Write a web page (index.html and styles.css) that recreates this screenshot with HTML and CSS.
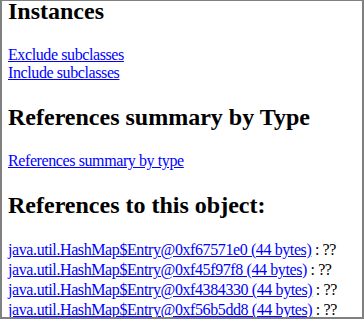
FILE: index.html
```html
<!DOCTYPE html>
<html lang="en">
<head>
<meta charset="utf-8"/>
<title>Object references</title>
<link rel="stylesheet" href="styles.css">
</head>
<body>
<div class="frame">
<h2 class="first">Instances</h2>
<a href="#">Exclude subclasses</a><br>
<a href="#">Include subclasses</a><br>

<h2>References summary by Type</h2>
<a href="#">References summary by type</a>

<h2>References to this object:</h2>
<div class="ref-list">
  <div class="ref-row"><a href="#">java.util.HashMap$Entry@0xf67571e0 (44 bytes)</a> : ??</div>
  <div class="ref-row"><a href="#">java.util.HashMap$Entry@0xf45f97f8 (44 bytes)</a> : ??</div>
  <div class="ref-row"><a href="#">java.util.HashMap$Entry@0xf4384330 (44 bytes)</a> : ??</div>
  <div class="ref-row"><a href="#">java.util.HashMap$Entry@0xf56b5dd8 (44 bytes)</a> : ??</div>
</div>
</div>
</body>
</html>
```

FILE: styles.css
```css
html, body { margin: 0; background: #fff; }
.frame {
  height: 319px;
  box-sizing: border-box;
  overflow: hidden;
  border-style: solid;
  border-color: #808080;
  border-width: 1px 2px 2px 2px;
  padding: 0 6px;
  font-family: "Liberation Serif", "Times New Roman", serif;
  font-size: 16px;
  letter-spacing: -0.4px;
  line-height: 18px;
  color: #000;
}
h2 { font-size: 24px; line-height: 28px; font-weight: bold; letter-spacing: 0; margin: 21px 0; }
h2.first { margin-top: -4px; }
a { color: #0000ff; }
.ref-row { line-height: 20px; white-space: nowrap; }
```
